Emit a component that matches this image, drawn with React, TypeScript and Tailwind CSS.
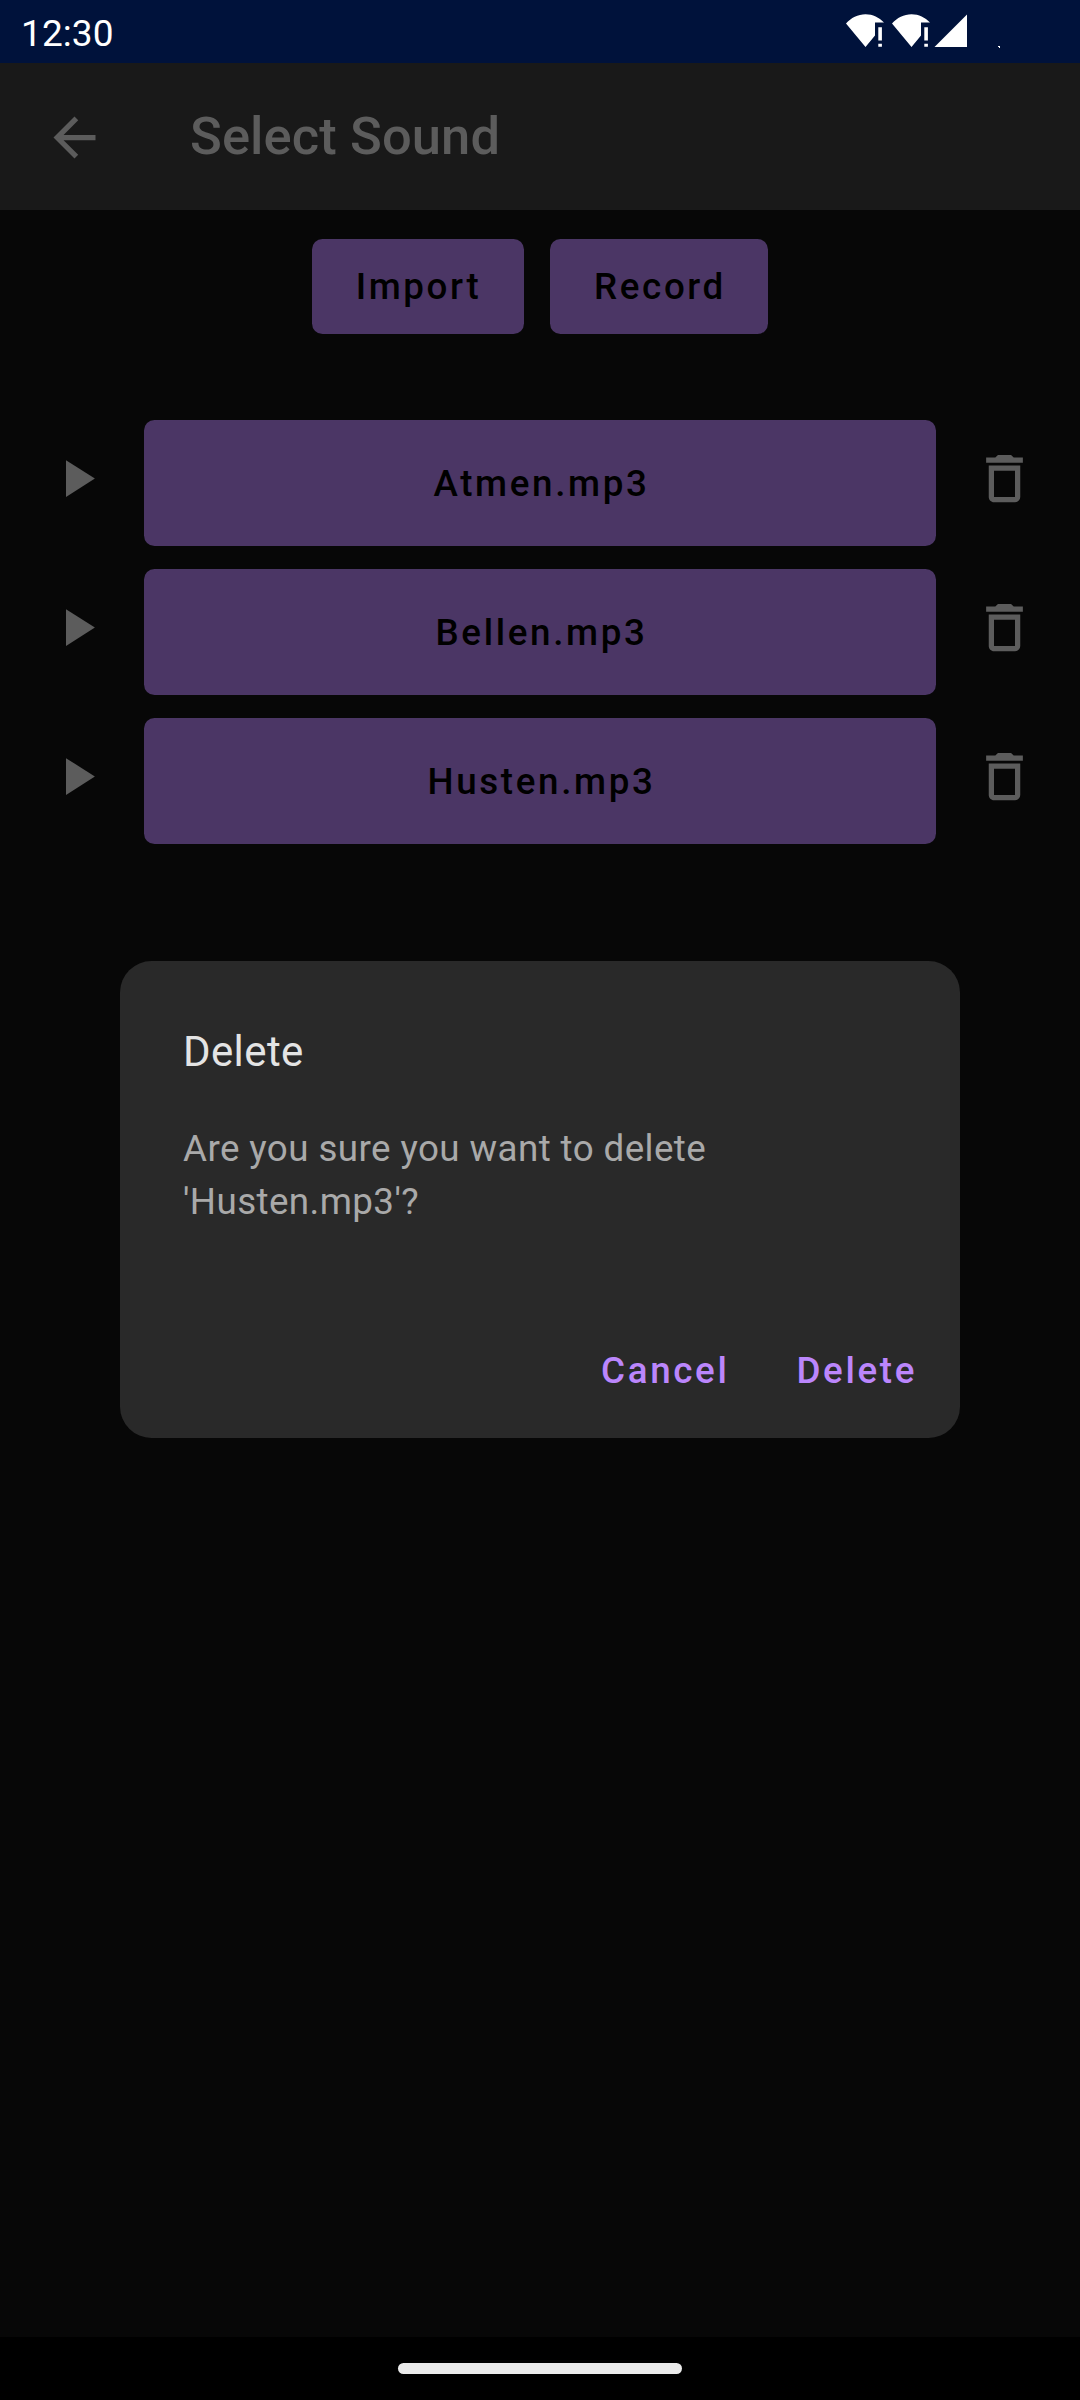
import React from "react";

const sounds = ["Atmen.mp3", "Bellen.mp3", "Husten.mp3"];

function WifiAlertIcon() {
  return (
    <svg className="block h-[34px] w-[46px]" viewBox="0 0 46 34" fill="#fff">
      <path d="M0 9.500C5 4 12 .300 19.500 .300C27 .300 33 3.500 38 8.500H29V21.500L19.500 33Z" />
      <path d="M32.300 13.300h3.600V26.500h-3.600zM32.300 29.800h3.600v3h-3.600z" />
    </svg>
  );
}

function StatusBar() {
  return (
    <div className="flex h-[63px] items-start bg-[#00123b] text-white">
      <span className="ml-[21px] mt-[12px] text-[37px] leading-[44px] tracking-[0.1px]">12:30</span>
      <div className="ml-auto mr-[76px] mt-[14px] flex h-[34px]">
        <WifiAlertIcon />
        <WifiAlertIcon />
        <svg className="-ml-[4px] block h-[34px] w-[70px]" viewBox="0 0 70 34" fill="#fff">
          <path d="M.5 33L33 .5V33Z" />
          <path d="M64 32h2v2h-1v-1h-1z" />
        </svg>
      </div>
    </div>
  );
}

function AppBar() {
  return (
    <header className="flex h-[147px] items-center bg-[#191919] pl-[43px] text-[#5c5c5c]">
      <svg className="block h-[63px] w-[63px] translate-y-px" viewBox="0 0 24 24" fill="currentColor">
        <path d="M20 11H7.830l5.590-5.590L12 4l-8 8 8 8 1.410-1.410L7.830 13H20v-2z" />
      </svg>
      <h1 className="mb-[2px] ml-[84px] text-[52.5px] font-medium leading-[62px] tracking-[0.1px]">Select Sound</h1>
    </header>
  );
}

function SoundRow({ name }: { name: string }) {
  return (
    <li className="flex h-[126px] pl-[45px] text-[#5c5c5c]">
      <svg className="mt-[27px] block h-[63px] w-[63px]" viewBox="0 0 24 24" fill="currentColor">
        <path d="M8 5v14l11-7z" />
      </svg>
      <button className="ml-[36px] w-[792px] rounded-[10.5px] bg-[#4b3665] pl-[3px] pt-[2px] text-[36.75px] font-medium tracking-[2.65px] text-black">
        {name}
      </button>
      <svg className="ml-[37px] mt-[27px] block h-[63px] w-[63px]" viewBox="0 0 24 24" fill="currentColor">
        <path
          fillRule="evenodd"
          d="M19 4h-3.500l-1-1h-5l-1 1H5v2h14zM6 19c0 1.100.900 2 2 2h8c1.100 0 2-.900 2-2V7H6zM8 9h8v10H8z"
        />
      </svg>
    </li>
  );
}

function DeleteDialog() {
  return (
    <section
      role="dialog"
      className="absolute left-[120px] top-[961px] flex h-[477px] w-[840px] flex-col rounded-[31.5px] bg-[#292929] px-[63px] pt-[66px]"
    >
      <h2 className="text-[42px] leading-[50px] tracking-[0.39px] text-[#e4e4e4]">Delete</h2>
      <p className="mt-[45px] text-[36.75px] leading-[53px] tracking-[0.41px] text-[#a9a9a9]">
        Are you sure you want to delete
        <br />
        'Husten.mp3'?
      </p>
      <div className="-mr-[20px] mt-[121px] flex justify-end gap-[67px] text-[36.75px] font-medium leading-[44px] tracking-[2.65px] text-[#bb86fc]">
        <button>Cancel</button>
        <button>Delete</button>
      </div>
    </section>
  );
}

export default function App() {
  return (
    <div className="relative flex h-[2400px] w-[1080px] flex-col overflow-hidden bg-[#070707] font-['Roboto',sans-serif]">
      <StatusBar />
      <AppBar />
      <main className="flex-1">
        <div className="mt-[29px] flex h-[95px] justify-center gap-[26px] text-[36.75px] font-medium tracking-[2.6px] text-black">
          <button className="w-[212px] rounded-[10.5px] bg-[#4b3665] pl-px">Import</button>
          <button className="w-[218px] rounded-[10.5px] bg-[#4b3665] pl-[2px]">Record</button>
        </div>
        <ul className="mt-[86px] flex flex-col gap-[23px]">
          {sounds.map((name) => (
            <SoundRow key={name} name={name} />
          ))}
        </ul>
      </main>
      <nav className="flex h-[63px] items-start justify-center bg-black pt-[26px]">
        <div className="h-[11px] w-[284px] rounded-full bg-[#ebebeb]" />
      </nav>
      <DeleteDialog />
    </div>
  );
}
